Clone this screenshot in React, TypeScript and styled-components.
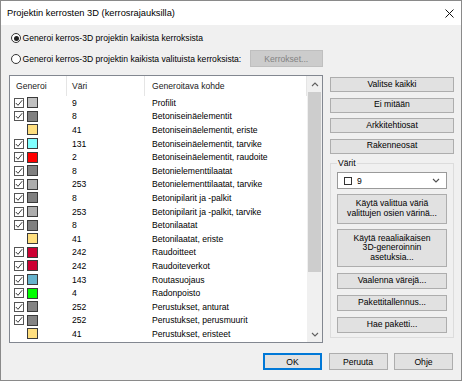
import React from 'react';
import styled, { createGlobalStyle } from 'styled-components';

const FONT = `"Liberation Sans", Arial, sans-serif`;

const Global = createGlobalStyle`
  html, body { margin: 0; padding: 0; background: #f0f0f0; }
  body { font-family: ${FONT}; }
  * { box-sizing: border-box; }
`;

const Window = styled.div`
  width: 462px;
  height: 381px;
  border: 1px solid #8a8a8a;
  background: #f0f0f0;
  display: flex;
  flex-direction: column;
  font-family: ${FONT};
  font-size: 8.6px;
  color: #000;
  overflow: hidden;
`;

const TitleBar = styled.div`
  height: 24px;
  flex: none;
  background: #fff;
  display: flex;
  align-items: center;
  justify-content: space-between;
  padding: 0 7px 0 6px;
`;

const Title = styled.span`
  font-size: 9.3px;
  color: #000;
`;

const Body = styled.div`
  flex: 1;
  display: flex;
  flex-direction: column;
  padding: 5px 6px 0 8px;
`;

const RadioRow = styled.div<{ $h: number; $mt: number }>`
  display: flex;
  align-items: center;
  height: ${(p) => p.$h}px;
  margin-top: ${(p) => p.$mt}px;
  padding-left: 2px;
  gap: 1.5px;
`;

const RadioCircle = styled.span<{ $on?: boolean }>`
  width: 10px;
  height: 10px;
  border-radius: 50%;
  border: 1px solid #333;
  background: #fff;
  display: flex;
  align-items: center;
  justify-content: center;
  flex: none;
  &::after {
    content: '';
    display: ${(p) => (p.$on ? 'block' : 'none')};
    width: 5px;
    height: 5px;
    border-radius: 50%;
    background: #222;
  }
`;

const DisabledButton = styled.div`
  margin-left: 7px;
  width: 73px;
  height: 17px;
  background: #cccccc;
  border: 1px solid #bfbfbf;
  color: #838383;
  display: flex;
  align-items: center;
  justify-content: center;
`;

const Main = styled.div`
  display: flex;
  gap: 7px;
  margin-top: 8px;
  height: 268px;
`;

const ListBox = styled.div`
  width: 314px;
  height: 268px;
  border: 1px solid #828790;
  background: #fff;
  display: flex;
  overflow: hidden;
  flex: none;
`;

const ListContent = styled.div`
  flex: 1;
  display: flex;
  flex-direction: column;
  overflow: hidden;
`;

const Grid = styled.div<{ $h: number }>`
  display: grid;
  grid-template-columns: 57px 78px 1fr;
  height: ${(p) => p.$h}px;
  flex: none;
`;

const HeaderCell = styled.div<{ $pl: number }>`
  display: flex;
  align-items: center;
  padding-left: ${(p) => p.$pl}px;
  border-right: 1px solid #e5e5e5;
  color: #1a1a1a;
`;

const Cell = styled.div<{ $pl: number }>`
  display: flex;
  align-items: center;
  padding-left: ${(p) => p.$pl}px;
  gap: 3px;
  white-space: nowrap;
`;

const CheckBox = styled.span`
  width: 10px;
  height: 10px;
  border: 1px solid #555;
  background: #fff;
  display: flex;
  flex: none;
`;

const CheckSpacer = styled.span`
  width: 10px;
  height: 10px;
  flex: none;
`;

const Swatch = styled.span<{ $c: string }>`
  width: 11px;
  height: 11px;
  border: 1px solid #3a3a3a;
  background: ${(p) => p.$c};
  flex: none;
`;

const ScrollBar = styled.div`
  width: 15px;
  flex: none;
  background: #f0f0f0;
  display: flex;
  flex-direction: column;
`;

const ScrollArrow = styled.div`
  height: 16px;
  flex: none;
  display: flex;
  align-items: center;
  justify-content: center;
`;

const ScrollThumb = styled.div`
  height: 180px;
  margin: 0 1px;
  background: #cdcdcd;
  flex: none;
`;

const ScrollTrack = styled.div`
  flex: 1;
`;

const Side = styled.div`
  width: 124px;
  display: flex;
  flex-direction: column;
  padding-top: 2px;
`;

const SideButtons = styled.div`
  display: flex;
  flex-direction: column;
  gap: 5.5px;
`;

const Button = styled.div<{ $h?: number }>`
  height: ${(p) => p.$h ?? 15}px;
  background: #e1e1e1;
  border: 1px solid #adadad;
  display: flex;
  align-items: center;
  justify-content: center;
  text-align: center;
  white-space: pre-line;
  line-height: 9.6px;
  flex: none;
`;

const Group = styled.fieldset`
  margin: 4.5px 0 0 0;
  padding: 4px 6px 4px 6px;
  border: 1px solid #dcdcdc;
  min-width: 0;
`;

const Legend = styled.legend`
  padding: 0 1px;
  line-height: 10px;
  font-size: 8.6px;
`;

const GroupInner = styled.div`
  display: flex;
  flex-direction: column;
`;

const Combo = styled.div`
  height: 17px;
  background: #fff;
  border: 1px solid #9a9a9a;
  display: flex;
  align-items: center;
  padding: 0 6px;
`;

const ComboSwatch = styled.span`
  width: 8px;
  height: 8px;
  border: 1px solid #333;
  background: #fff;
  flex: none;
`;

const ComboText = styled.span`
  margin-left: 5px;
`;

const ComboArrow = styled.span`
  margin-left: auto;
  display: flex;
`;

const Spaced = styled.div<{ $mt: number }>`
  margin-top: ${(p) => p.$mt}px;
  display: flex;
  flex-direction: column;
`;

const Footer = styled.div`
  display: flex;
  justify-content: flex-end;
  gap: 6.5px;
  padding: 0 8px 10px 0;
  margin-top: 10px;
  flex: none;
`;

const DialogButton = styled.div<{ $default?: boolean }>`
  width: 59px;
  height: 17px;
  background: #e1e1e1;
  border: 1px solid ${(p) => (p.$default ? '#0078d7' : '#adadad')};
  box-shadow: ${(p) => (p.$default ? 'inset 0 0 0 1px #0078d7' : 'none')};
  display: flex;
  align-items: center;
  justify-content: center;
`;

type Row = { checked: boolean | null; color: string; code: string; name: string };

const C9 = '#c0c0c0';
const C8 = '#808080';
const C41 = '#ffdf7f';
const C253 = '#adadad';
const C252 = '#848484';
const C242 = '#cc0033';

const rows: Row[] = [
  { checked: true, color: C9, code: '9', name: 'Profilit' },
  { checked: true, color: C8, code: '8', name: 'Betoniseinäelementit' },
  { checked: null, color: C41, code: '41', name: 'Betoniseinäelementit, eriste' },
  { checked: true, color: '#7fffff', code: '131', name: 'Betoniseinäelementit, tarvike' },
  { checked: true, color: '#ff0000', code: '2', name: 'Betoniseinäelementit, raudoite' },
  { checked: true, color: C8, code: '8', name: 'Betonielementtilaatat' },
  { checked: true, color: C253, code: '253', name: 'Betonielementtilaatat, tarvike' },
  { checked: true, color: C8, code: '8', name: 'Betonipilarit ja -palkit' },
  { checked: true, color: C253, code: '253', name: 'Betonipilarit ja -palkit, tarvike' },
  { checked: true, color: C8, code: '8', name: 'Betonilaatat' },
  { checked: null, color: C41, code: '41', name: 'Betonilaatat, eriste' },
  { checked: true, color: C242, code: '242', name: 'Raudoitteet' },
  { checked: true, color: C242, code: '242', name: 'Raudoiteverkot' },
  { checked: true, color: '#66b2cc', code: '143', name: 'Routasuojaus' },
  { checked: true, color: '#00ff00', code: '4', name: 'Radonpoisto' },
  { checked: true, color: C252, code: '252', name: 'Perustukset, anturat' },
  { checked: true, color: C252, code: '252', name: 'Perustukset, perusmuurit' },
  { checked: null, color: C41, code: '41', name: 'Perustukset, eristeet' },
  { checked: true, color: C252, code: '', name: '' },
];

const Check = () => (
  <svg width="8" height="8" viewBox="0 0 8 8">
    <polyline points="0.8,4 3,6.3 7.2,1.2" fill="none" stroke="#222" strokeWidth="0.9" />
  </svg>
);

const Chevron = ({ up, color }: { up?: boolean; color: string }) => (
  <svg width="8" height="5" viewBox="0 0 8 5">
    <polyline
      points={up ? '1,4 4,1 7,4' : '1,1 4,4 7,1'}
      fill="none"
      stroke={color}
      strokeWidth="1.1"
    />
  </svg>
);

const CloseIcon = () => (
  <svg width="9" height="9" viewBox="0 0 9 9">
    <path d="M0.5 0.5 L8.5 8.5 M8.5 0.5 L0.5 8.5" stroke="#111" strokeWidth="1" />
  </svg>
);

export default function App() {
  return (
    <>
      <Global />
      <Window>
        <TitleBar>
          <Title>Projektin kerrosten 3D (kerrosrajauksilla)</Title>
          <CloseIcon />
        </TitleBar>
        <Body>
          <RadioRow $h={16} $mt={0}>
            <RadioCircle $on />
            <span>Generoi kerros-3D projektin kaikista kerroksista</span>
          </RadioRow>
          <RadioRow $h={17} $mt={4}>
            <RadioCircle />
            <span>Generoi kerros-3D projektin kaikista valituista kerroksista:</span>
            <DisabledButton>Kerrokset...</DisabledButton>
          </RadioRow>
          <Main>
            <ListBox>
              <ListContent>
                <Grid $h={20}>
                  <HeaderCell $pl={6}>Generoi</HeaderCell>
                  <HeaderCell $pl={5}>Väri</HeaderCell>
                  <HeaderCell $pl={7}>Generoitava kohde</HeaderCell>
                </Grid>
                {rows.map((r, i) => (
                  <Grid $h={13.6} key={i}>
                    <Cell $pl={4}>
                      {r.checked ? (
                        <CheckBox>
                          <Check />
                        </CheckBox>
                      ) : (
                        <CheckSpacer />
                      )}
                      <Swatch $c={r.color} />
                    </Cell>
                    <Cell $pl={5}>{r.code}</Cell>
                    <Cell $pl={7}>{r.name}</Cell>
                  </Grid>
                ))}
              </ListContent>
              <ScrollBar>
                <ScrollArrow>
                  <Chevron up color="#606060" />
                </ScrollArrow>
                <ScrollThumb />
                <ScrollTrack />
                <ScrollArrow>
                  <Chevron color="#606060" />
                </ScrollArrow>
              </ScrollBar>
            </ListBox>
            <Side>
              <SideButtons>
                <Button>Valitse kaikki</Button>
                <Button>Ei mitään</Button>
                <Button>Arkkitehtiosat</Button>
                <Button>Rakenneosat</Button>
              </SideButtons>
              <Group>
                <Legend>Värit</Legend>
                <GroupInner>
                  <Combo>
                    <ComboSwatch />
                    <ComboText>9</ComboText>
                    <ComboArrow>
                      <Chevron color="#505050" />
                    </ComboArrow>
                  </Combo>
                  <Spaced $mt={5}>
                    <Button $h={30}>{'Käytä valittua väriä\nvalittujen osien värinä...'}</Button>
                  </Spaced>
                  <Spaced $mt={5}>
                    <Button $h={38}>{'Käytä reaaliaikaisen\n3D-generoinnin\nasetuksia...'}</Button>
                  </Spaced>
                  <Spaced $mt={6}>
                    <Button $h={16}>Vaalenna värejä...</Button>
                  </Spaced>
                  <Spaced $mt={6}>
                    <Button $h={16}>Pakettitallennus...</Button>
                  </Spaced>
                  <Spaced $mt={6}>
                    <Button $h={16}>Hae paketti...</Button>
                  </Spaced>
                </GroupInner>
              </Group>
            </Side>
          </Main>
        </Body>
        <Footer>
          <DialogButton $default>OK</DialogButton>
          <DialogButton>Peruuta</DialogButton>
          <DialogButton>Ohje</DialogButton>
        </Footer>
      </Window>
    </>
  );
}
